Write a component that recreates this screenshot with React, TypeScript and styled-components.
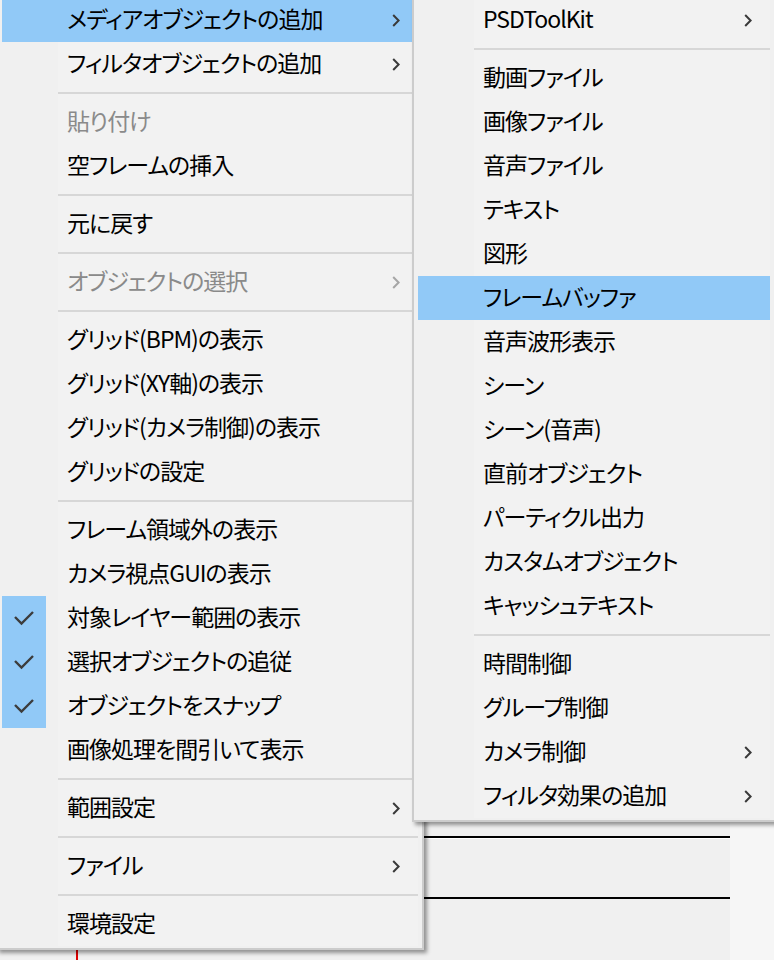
import React from 'react';
import styled, { createGlobalStyle } from 'styled-components';

const GlobalStyle = createGlobalStyle`
  html, body {
    margin: 0;
    padding: 0;
    background: #f0f0f0;
  }
  body {
    font-family: "Noto Sans CJK JP", "Noto Sans", sans-serif;
  }
`;

type Entry =
  | { kind: 'sep' }
  | { kind: 'item'; label: string; sub?: boolean; active?: boolean; disabled?: boolean; checked?: boolean };

const sep: Entry = { kind: 'sep' };
const item = (label: string, opts: Partial<Omit<Extract<Entry, { kind: 'item' }>, 'kind' | 'label'>> = {}): Entry => ({
  kind: 'item',
  label,
  ...opts,
});

const mainMenu: Entry[] = [
  item('メディアオブジェクトの追加', { sub: true, active: true }),
  item('フィルタオブジェクトの追加', { sub: true }),
  sep,
  item('貼り付け', { disabled: true }),
  item('空フレームの挿入'),
  sep,
  item('元に戻す'),
  sep,
  item('オブジェクトの選択', { sub: true, disabled: true }),
  sep,
  item('グリッド(BPM)の表示'),
  item('グリッド(XY軸)の表示'),
  item('グリッド(カメラ制御)の表示'),
  item('グリッドの設定'),
  sep,
  item('フレーム領域外の表示'),
  item('カメラ視点GUIの表示'),
  item('対象レイヤー範囲の表示', { checked: true }),
  item('選択オブジェクトの追従', { checked: true }),
  item('オブジェクトをスナップ', { checked: true }),
  item('画像処理を間引いて表示'),
  sep,
  item('範囲設定', { sub: true }),
  sep,
  item('ファイル', { sub: true }),
  sep,
  item('環境設定'),
];

const mediaMenu: Entry[] = [
  item('PSDToolKit', { sub: true }),
  sep,
  item('動画ファイル'),
  item('画像ファイル'),
  item('音声ファイル'),
  item('テキスト'),
  item('図形'),
  item('フレームバッファ', { active: true }),
  item('音声波形表示'),
  item('シーン'),
  item('シーン(音声)'),
  item('直前オブジェクト'),
  item('パーティクル出力'),
  item('カスタムオブジェクト'),
  item('キャッシュテキスト'),
  sep,
  item('時間制御'),
  item('グループ制御'),
  item('カメラ制御', { sub: true }),
  item('フィルタ効果の追加', { sub: true }),
];

const Screen = styled.div`
  position: relative;
  width: 774px;
  height: 960px;
  overflow: hidden;
`;

const Timeline = styled.div`
  display: grid;
  grid-template-columns: 730px 1fr;
  height: 100%;
`;

const TrackArea = styled.div`
  position: relative;
  display: flex;
  flex-direction: column;
  padding-top: 45px;
  background: #f0f0f0;
`;

const Layer = styled.div`
  height: 58px;
  border-top: 1px solid #ffffff;
  border-bottom: 2px solid #000000;
`;

const SidePane = styled.div`
  background: #f6f6f6;
`;

const Cursor = styled.div`
  position: absolute;
  left: 76px;
  top: 0;
  bottom: 0;
  width: 2px;
  background: #e00000;
`;

const Menu = styled.div<{ $left: number; $top: number; $width: number }>`
  position: absolute;
  left: ${p => p.$left}px;
  top: ${p => p.$top}px;
  width: ${p => p.$width}px;
  box-sizing: border-box;
  padding: 2px 4px;
  background: #f0f0f0;
  border: 2px solid #cccccc;
  box-shadow: 3px 3px 4px rgba(0, 0, 0, 0.4);
`;

const List = styled.div`
  display: flex;
  flex-direction: column;
  background: linear-gradient(to right, #f0f0f0 56px, #f2f2f2 56px);
`;

const Row = styled.div<{ $active?: boolean; $disabled?: boolean }>`
  display: grid;
  grid-template-columns: 56px 1fr 26px;
  align-items: center;
  height: 44px;
  background: ${p => (p.$active ? '#91c9f7' : 'transparent')};
  color: ${p => (p.$disabled ? '#8a8a8a' : '#000000')};
  font-size: 23px;
  letter-spacing: -1px;
  font-feature-settings: "palt";
  white-space: nowrap;
`;

const Gutter = styled.div<{ $checked?: boolean }>`
  display: flex;
  align-items: center;
  justify-content: center;
  width: 44px;
  height: 100%;
  background: ${p => (p.$checked ? '#91c9f7' : 'transparent')};
`;

const Label = styled.span`
  padding-left: 9px;
  padding-bottom: 4px;
  line-height: 40px;
`;

const Arrow = styled.span<{ $disabled?: boolean }>`
  display: flex;
  align-items: center;
  color: ${p => (p.$disabled ? '#a6a6a6' : '#3a3a3a')};
`;

const Separator = styled.div`
  display: flex;
  align-items: center;
  height: 14px;
  padding-left: 56px;

  &::after {
    content: '';
    flex: 1;
    height: 2px;
    background: #d7d7d7;
  }
`;

const Check = () => (
  <svg width="20" height="16" viewBox="0 0 20 16">
    <path d="M1 7 L7.5 13.5 L19 2" fill="none" stroke="#3c3c3c" strokeWidth="2.4" />
  </svg>
);

const Chevron = () => (
  <svg width="8" height="13" viewBox="0 0 8 13">
    <path d="M1.2 1 L6.6 6.5 L1.2 12" fill="none" stroke="currentColor" strokeWidth="2" />
  </svg>
);

const MenuList: React.FC<{ entries: Entry[] }> = ({ entries }) => (
  <List>
    {entries.map((e, i) =>
      e.kind === 'sep' ? (
        <Separator key={i} />
      ) : (
        <Row key={i} $active={e.active} $disabled={e.disabled}>
          <Gutter $checked={e.checked}>{e.checked && <Check />}</Gutter>
          <Label>{e.label}</Label>
          <Arrow $disabled={e.disabled}>{e.sub && <Chevron />}</Arrow>
        </Row>
      )
    )}
  </List>
);

const App: React.FC = () => (
  <>
    <GlobalStyle />
    <Screen>
      <Timeline>
        <TrackArea>
          {Array.from({ length: 14 }).map((_, i) => (
            <Layer key={i} />
          ))}
          <Cursor />
        </TrackArea>
        <SidePane />
      </Timeline>

      <Menu $left={-4} $top={-6} $width={428}>
        <MenuList entries={mainMenu} />
      </Menu>
      <Menu $left={412} $top={-6} $width={364}>
        <MenuList entries={mediaMenu} />
      </Menu>
    </Screen>
  </>
);

export default App;
